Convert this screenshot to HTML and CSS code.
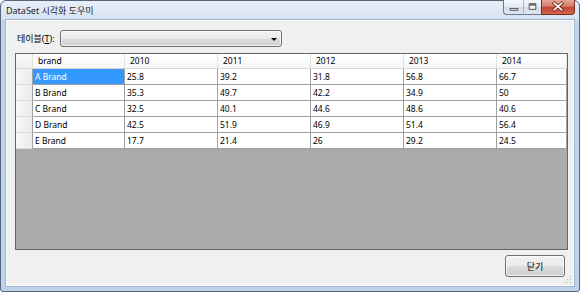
FILE: index.html
```html
<!DOCTYPE html>
<html lang="ko">
<head>
    <meta charset="UTF-8">
    <meta name="viewport" content="width=device-width, initial-scale=1.0">
    <title>DataSet 시각화 도우미</title>
    <link rel="stylesheet" href="styles.css">
</head>
<body>
    <div class="window">
        <!-- 타이틀 바 -->
        <div class="titlebar">
            <span class="title">DataSet 시각화 도우미</span>
            <div class="caption">
                <span class="cap-btn cap-min">
                    <svg width="20" height="14" viewBox="0 0 20 14"><rect x="6.5" y="8.5" width="8" height="2" fill="#e9e9e9" stroke="#555"/></svg>
                </span>
                <span class="cap-btn cap-max">
                    <svg width="18" height="14" viewBox="0 0 18 14"><rect x="5.5" y="3.5" width="7" height="6" fill="#f4f4f4" stroke="#555"/><rect x="6" y="4" width="6" height="1.5" fill="#555"/></svg>
                </span>
                <span class="cap-btn cap-close">
                    <svg width="34" height="14" viewBox="0 0 34 14"><path d="M13 3 L21 10 M21 3 L13 10" stroke="#6b1e12" stroke-width="3.4" stroke-linecap="square"/><path d="M13 3 L21 10 M21 3 L13 10" stroke="#fff" stroke-width="1.8" stroke-linecap="square"/></svg>
                </span>
            </div>
        </div>

        <!-- 클라이언트 영역 -->
        <div class="client">
            <div class="field">
                <label class="field-label">테이블(<u>T</u>):</label>
                <div class="combo"><span class="combo-arrow"></span></div>
            </div>

            <div class="grid">
                <div class="sheet">
                    <div class="corner"></div>
                    <div class="colhead">brand</div>
                    <div class="colhead">2010</div>
                    <div class="colhead">2011</div>
                    <div class="colhead">2012</div>
                    <div class="colhead">2013</div>
                    <div class="colhead">2014</div>

                    <div class="rowhead"></div>
                    <div class="cell selected">A Brand</div>
                    <div class="cell">25.8</div>
                    <div class="cell">39.2</div>
                    <div class="cell">31.8</div>
                    <div class="cell">56.8</div>
                    <div class="cell">66.7</div>

                    <div class="rowhead"></div>
                    <div class="cell">B Brand</div>
                    <div class="cell">35.3</div>
                    <div class="cell">49.7</div>
                    <div class="cell">42.2</div>
                    <div class="cell">34.9</div>
                    <div class="cell">50</div>

                    <div class="rowhead"></div>
                    <div class="cell">C Brand</div>
                    <div class="cell">32.5</div>
                    <div class="cell">40.1</div>
                    <div class="cell">44.6</div>
                    <div class="cell">48.6</div>
                    <div class="cell">40.6</div>

                    <div class="rowhead"></div>
                    <div class="cell">D Brand</div>
                    <div class="cell">42.5</div>
                    <div class="cell">51.9</div>
                    <div class="cell">46.9</div>
                    <div class="cell">51.4</div>
                    <div class="cell">56.4</div>

                    <div class="rowhead"></div>
                    <div class="cell">E Brand</div>
                    <div class="cell">17.7</div>
                    <div class="cell">21.4</div>
                    <div class="cell">26</div>
                    <div class="cell">29.2</div>
                    <div class="cell">24.5</div>
                </div>
            </div>

            <div class="footer">
                <button class="btn">닫기</button>
            </div>

            <!-- 크기 조절 그립 -->
            <svg class="grip" width="8" height="8" viewBox="0 0 8 8">
                <rect x="6" y="0" width="1" height="1" fill="#b5b5b5"/>
                <rect x="3" y="3" width="1" height="1" fill="#b5b5b5"/>
                <rect x="6" y="3" width="1" height="1" fill="#b5b5b5"/>
                <rect x="0" y="6" width="1" height="1" fill="#b5b5b5"/>
                <rect x="3" y="6" width="1" height="1" fill="#b5b5b5"/>
                <rect x="6" y="6" width="1" height="1" fill="#b5b5b5"/>
            </svg>
        </div>
    </div>
</body>
</html>
```

FILE: styles.css
```css
body {
    margin: 0;
    font-family: "Noto Sans", "Noto Sans CJK KR", sans-serif;
    font-size: 9px;
    color: #000;
}

.window {
    width: 580px;
    height: 292px;
    box-sizing: border-box;
    border: 1px solid #56657c;
    border-radius: 6px 6px 3px 3px;
    background: linear-gradient(#e8eff8, #d5e2f2 19px, #c4d6ec 19px, #bed2ea);
    padding: 0 5px 5px;
    display: flex;
    flex-direction: column;
}

.titlebar {
    height: 19px;
    display: flex;
    align-items: flex-start;
}

.title {
    padding-top: 4px;
    line-height: 12px;
    color: #1e1e1e;
}

.caption {
    margin-left: auto;
    margin-top: -1px;
    margin-right: -1px;
    display: flex;
}

.cap-btn {
    height: 15px;
    box-sizing: border-box;
    display: flex;
}

.cap-min {
    width: 20px;
    border: 1px solid #6b7b93;
    border-top: none;
    border-right: none;
    border-radius: 0 0 0 4px;
    background: linear-gradient(#f5f8fc, #e4ebf4 50%, #d3dceb 50%, #dfe7f2);
}

.cap-max {
    width: 18px;
    border-bottom: 1px solid #6b7b93;
    border-left: 1px solid #a8b5c7;
    background: linear-gradient(#f5f8fc, #e4ebf4 50%, #d3dceb 50%, #dfe7f2);
}

.cap-close {
    width: 34px;
    border: 1px solid #7a2c22;
    border-top: none;
    border-radius: 0 0 4px 0;
    background: linear-gradient(#e4a596, #d27e6b 45%, #c24631 50%, #d1664c);
}

.client {
    flex: 1;
    position: relative;
    background: #f0f0f0;
    border: 1px solid #fafcfe;
    outline: 1px solid #a3b6cf;
    padding: 9px 5px 0 8px;
    display: flex;
    flex-direction: column;
}

.field {
    display: flex;
    align-items: center;
    height: 17px;
    padding-left: 2px;
}

.field-label {
    margin-right: 5px;
    line-height: 12px;
}

.combo {
    width: 222px;
    height: 17px;
    box-sizing: border-box;
    border: 1px solid #707070;
    border-radius: 3px;
    background: linear-gradient(#f2f2f2, #ebebeb 50%, #dddddd 50%, #cfcfcf);
    box-shadow: inset 0 0 0 1px rgba(255, 255, 255, 0.7);
    display: flex;
    align-items: center;
    justify-content: flex-end;
    padding-right: 4px;
}

.combo-arrow {
    width: 0;
    height: 0;
    border-left: 3px solid transparent;
    border-right: 3px solid transparent;
    border-top: 3px solid #000;
    margin-top: 1px;
}

.grid {
    margin-top: 6px;
    height: 197px;
    box-sizing: border-box;
    border: 1px solid #646464;
    background: #ababab;
    overflow: hidden;
}

.sheet {
    display: grid;
    grid-template-columns: 17px 92px repeat(4, 93px) 70px;
    grid-template-rows: 15px repeat(5, 16px);
    font-size: 8.5px;
}

.corner,
.colhead,
.rowhead,
.cell {
    box-sizing: border-box;
    white-space: nowrap;
    overflow: hidden;
}

.corner {
    background: linear-gradient(#fafafa, #f0f0f0);
    border-right: 1px solid #dedede;
    border-bottom: 1px solid #d5d5d5;
}

.colhead {
    background: linear-gradient(#ffffff, #f7f8fa);
    border-right: 1px solid #e2e3e5;
    border-bottom: 1px solid #d5d5d5;
    padding-left: 5px;
    line-height: 14px;
}

.rowhead {
    background: linear-gradient(90deg, #f7f7f7, #ececec);
    border-right: 1px solid #a0a0a0;
    border-bottom: 1px solid #dcdcdc;
}

.cell {
    background: #fff;
    border-right: 1px solid #a0a0a0;
    border-bottom: 1px solid #a0a0a0;
    padding-left: 2px;
    line-height: 15px;
}

.cell.selected {
    background: #3399ff;
    color: #fff;
}

.footer {
    display: flex;
    justify-content: flex-end;
    margin-top: 5px;
    padding-right: 3px;
}

.btn {
    width: 60px;
    height: 22px;
    border: 1px solid #707070;
    border-radius: 3px;
    background: linear-gradient(#f2f2f2, #ebebeb 50%, #dddddd 50%, #cfcfcf);
    box-shadow: inset 0 0 0 1px rgba(255, 255, 255, 0.7);
    font-family: inherit;
    font-size: 9px;
    color: #000;
    padding: 0;
}

.grip {
    position: absolute;
    right: 1px;
    bottom: 1px;
}
```
